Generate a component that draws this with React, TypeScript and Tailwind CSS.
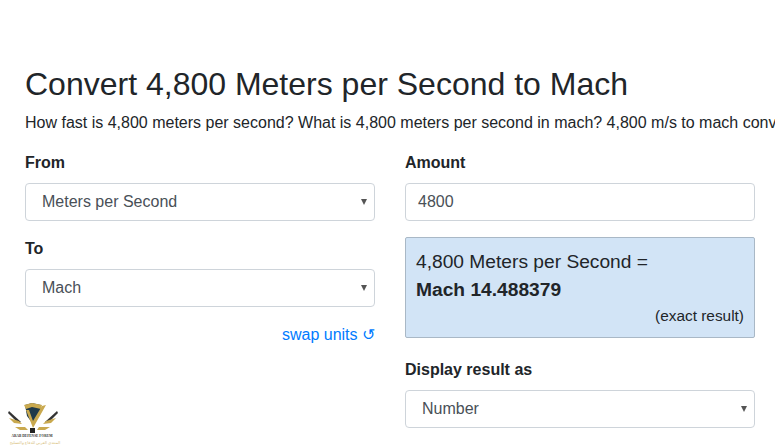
import React from "react";

function Caret() {
  return <span className="absolute right-[7px] top-1/2 -translate-y-1/2 w-0 h-0 border-l-[3.5px] border-r-[3.5px] border-t-[6px] border-l-transparent border-r-transparent border-t-[#555]" />;
}

function Select({ value }: { value: string }) {
  return (
    <div className="relative h-[38px] w-[350px] rounded border border-[#ced4da] bg-white flex items-center pl-4 text-base text-[#495057]">
      {value}
      <Caret />
    </div>
  );
}

function Logo() {
  return (
    <div className="absolute left-0 bottom-[1px] w-[66px] h-[45px] flex flex-col items-center">
      <svg width="62" height="32" viewBox="0 0 62 32" className="-ml-[2px]">
        <path d="M24 3 L31 1 L40 3 L39 13 L32 22 L26 14 Z" fill="#1f3a4a" />
        <path d="M23 3 L31 1 L41 3 L40 7 L31 5 L25 7 Z" fill="#c9a94f" />
        <path d="M25 8 L32 26 L45 3 L41 4 L32 19 L28 8 Z" fill="#c9a94f" />
        <path d="M8 9 L20 20 L17 21 L7 11 Z" fill="#333" />
        <path d="M56 9 L44 20 L47 21 L57 11 Z" fill="#333" />
        <path d="M8 16 L18 19 L21 22 L13 21 Z" fill="#c9a94f" />
        <path d="M55 16 L45 19 L42 22 L50 21 Z" fill="#c9a94f" />
        <path d="M14 25 L24 25 L27 28 L19 28 Z" fill="#c9a94f" />
        <path d="M49 25 L38 25 L36 28 L44 28 Z" fill="#c9a94f" />
        <path d="M29 26 h5 v5 h-5 z" fill="#222" />
      </svg>
      <span className="text-[3.5px] leading-[5px] font-bold text-[#333] whitespace-nowrap -ml-[2px] [font-family:'Liberation_Serif',serif]">ARAB DEFENSE FORUM</span>
      <span dir="rtl" className="mt-[1px] text-[4px] leading-[6px] text-[#d8c07a] whitespace-nowrap ml-[4px] [font-family:'Noto_Sans','DejaVu_Sans',sans-serif]">المنتدى العربي للدفاع والتسليح</span>
    </div>
  );
}

export default function App() {
  return (
    <div className="relative w-[775px] h-[448px] overflow-hidden bg-white text-[#212529] [font-family:'Liberation_Sans',Arial,sans-serif]">
      <div className="pt-[65px] pl-[25px]">
        <h1 className="text-[32px] leading-[38px] font-normal whitespace-nowrap">Convert 4,800 Meters per Second to Mach</h1>
        <p className="mt-[8px] text-base leading-6 whitespace-nowrap">How fast is 4,800 meters per second? What is 4,800 meters per second in mach? 4,800 m/s to mach conversion.</p>
        <div className="mt-[16px] flex gap-[30px]">
          <div className="w-[350px] flex flex-col">
            <label className="font-bold text-base leading-6">From</label>
            <div className="mt-[8px]"><Select value="Meters per Second" /></div>
            <label className="mt-[16px] font-bold text-base leading-6">To</label>
            <div className="mt-[8px]"><Select value="Mach" /></div>
            <div className="mt-[16px] flex justify-end text-base leading-6 text-[#007bff]">swap units ↺</div>
          </div>
          <div className="w-[350px] flex flex-col">
            <label className="font-bold text-base leading-6">Amount</label>
            <div className="mt-[8px] h-[38px] rounded border border-[#ced4da] bg-white flex items-center pl-3 text-base text-[#495057]">4800</div>
            <div className="mt-[16px] h-[101px] rounded-[2px] border border-[#a9b8c6] bg-[#d2e4f6] px-[10px] pt-[10px] flex flex-col">
              <div className="text-[19.2px] leading-7">4,800 Meters per Second =</div>
              <div className="text-[19.2px] leading-7 font-bold">Mach 14.488379</div>
              <div className="mt-[2px] text-right text-[15.4px] leading-5">(exact result)</div>
            </div>
            <label className="mt-[20px] font-bold text-base leading-6">Display result as</label>
            <div className="mt-[8px]"><Select value="Number" /></div>
          </div>
        </div>
      </div>
      <Logo />
    </div>
  );
}
